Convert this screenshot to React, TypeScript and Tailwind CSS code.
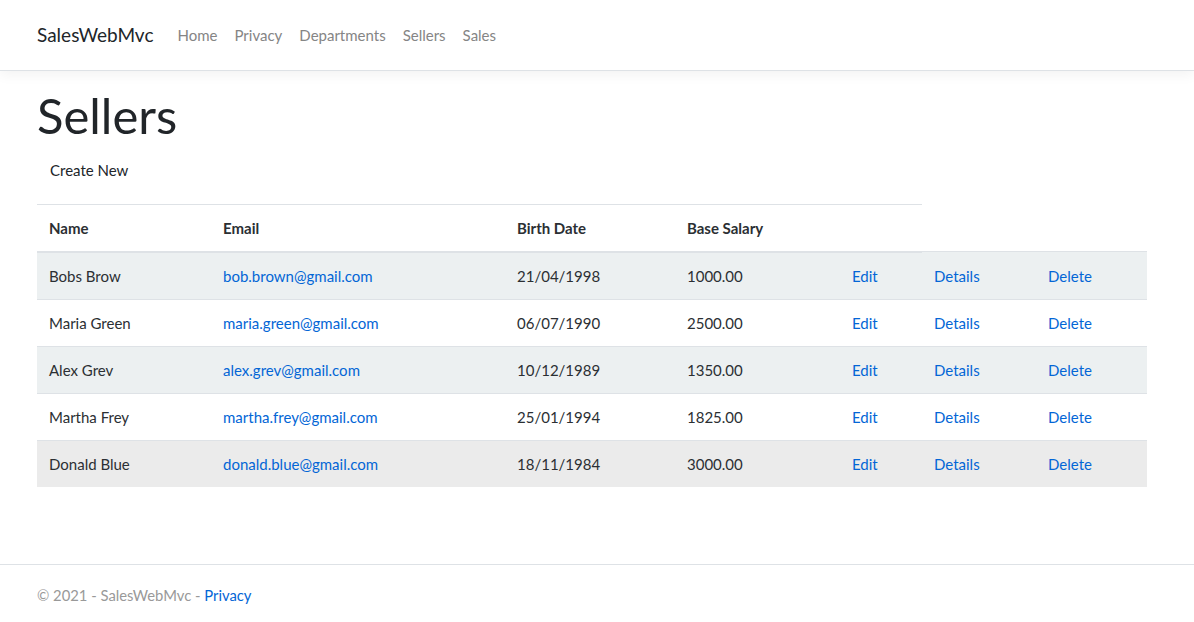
const sellers = [
  { name: "Bobs Brow", email: "bob.brown@gmail.com", birth: "21/04/1998", salary: "1000.00" },
  { name: "Maria Green", email: "maria.green@gmail.com", birth: "06/07/1990", salary: "2500.00" },
  { name: "Alex Grev", email: "alex.grev@gmail.com", birth: "10/12/1989", salary: "1350.00" },
  { name: "Martha Frey", email: "martha.frey@gmail.com", birth: "25/01/1994", salary: "1825.00" },
  { name: "Donald Blue", email: "donald.blue@gmail.com", birth: "18/11/1984", salary: "3000.00" },
];

const navLinks = ["Home", "Privacy", "Departments", "Sellers", "Sales"];

const rowBg = (i: number) => {
  if (i === 4) return "bg-[#ebebeb]"; // hovered row
  return i % 2 === 0 ? "bg-[#ecf0f1]" : "bg-white";
};

export default function App() {
  return (
    <div className="min-h-[625px] bg-white text-[#212529] font-['Lato','Noto_Sans',sans-serif] flex flex-col">
      <header className="h-[71px] border-b border-[#dee2e6] shadow-[0_4px_12px_rgba(0,0,0,0.05)] bg-white">
        <nav className="h-[70px] px-[37px] flex items-center">
          <span className="text-[19px] text-[#212529] mr-[24px]">SalesWebMvc</span>
          <ul className="flex items-center gap-[17px]">
            {navLinks.map((l) => (
              <li key={l} className="text-[15px] text-[#858585]">
                {l}
              </li>
            ))}
          </ul>
        </nav>
      </header>

      <main className="px-[37px] flex-1">
        <h1 className="text-[49px] leading-[1.2] mt-[15px] mb-[14px] text-[#212529]">Sellers</h1>
        <p className="text-[15px] px-[13px] leading-[22px] mb-[23px]">Create New</p>

        <table className="w-[1110px] table-fixed border-collapse text-[15px] leading-[22px] text-[#2b2f33]">
          <colgroup>
            <col className="w-[174px]" />
            <col className="w-[294px]" />
            <col className="w-[170px]" />
            <col className="w-[165px]" />
            <col className="w-[82px]" />
            <col className="w-[114px]" />
            <col className="w-[111px]" />
          </colgroup>
          <thead>
            <tr>
              {["Name", "Email", "Birth Date", "Base Salary", ""].map((h, i) => (
                <th
                  key={i}
                  className="text-left font-bold px-3 pt-3 pb-3 border-t border-b-2 border-[#dee2e6]"
                >
                  {h}
                </th>
              ))}
            </tr>
          </thead>
          <tbody>
            {sellers.map((s, i) => (
              <tr key={s.email} className={rowBg(i)}>
                <td className="px-3 py-3 border-t border-[#dee2e6]">{s.name}</td>
                <td className="px-3 py-3 border-t border-[#dee2e6] text-[#0366d6]">{s.email}</td>
                <td className="px-3 py-3 border-t border-[#dee2e6]">{s.birth}</td>
                <td className="px-3 py-3 border-t border-[#dee2e6]">{s.salary}</td>
                <td className="px-3 py-3 border-t border-[#dee2e6] text-[#0366d6]">Edit</td>
                <td className="px-3 py-3 border-t border-[#dee2e6] text-[#0366d6]">Details</td>
                <td className="px-3 py-3 border-t border-[#dee2e6] text-[#0366d6]">Delete</td>
              </tr>
            ))}
          </tbody>
        </table>
      </main>

      <footer className="border-t border-[#dee2e6] h-[61px] px-[37px] flex items-center text-[14.8px] text-[#999] whitespace-pre">
        © 2021 - SalesWebMvc - <span className="text-[#0366d6]">Privacy</span>
      </footer>
    </div>
  );
}
